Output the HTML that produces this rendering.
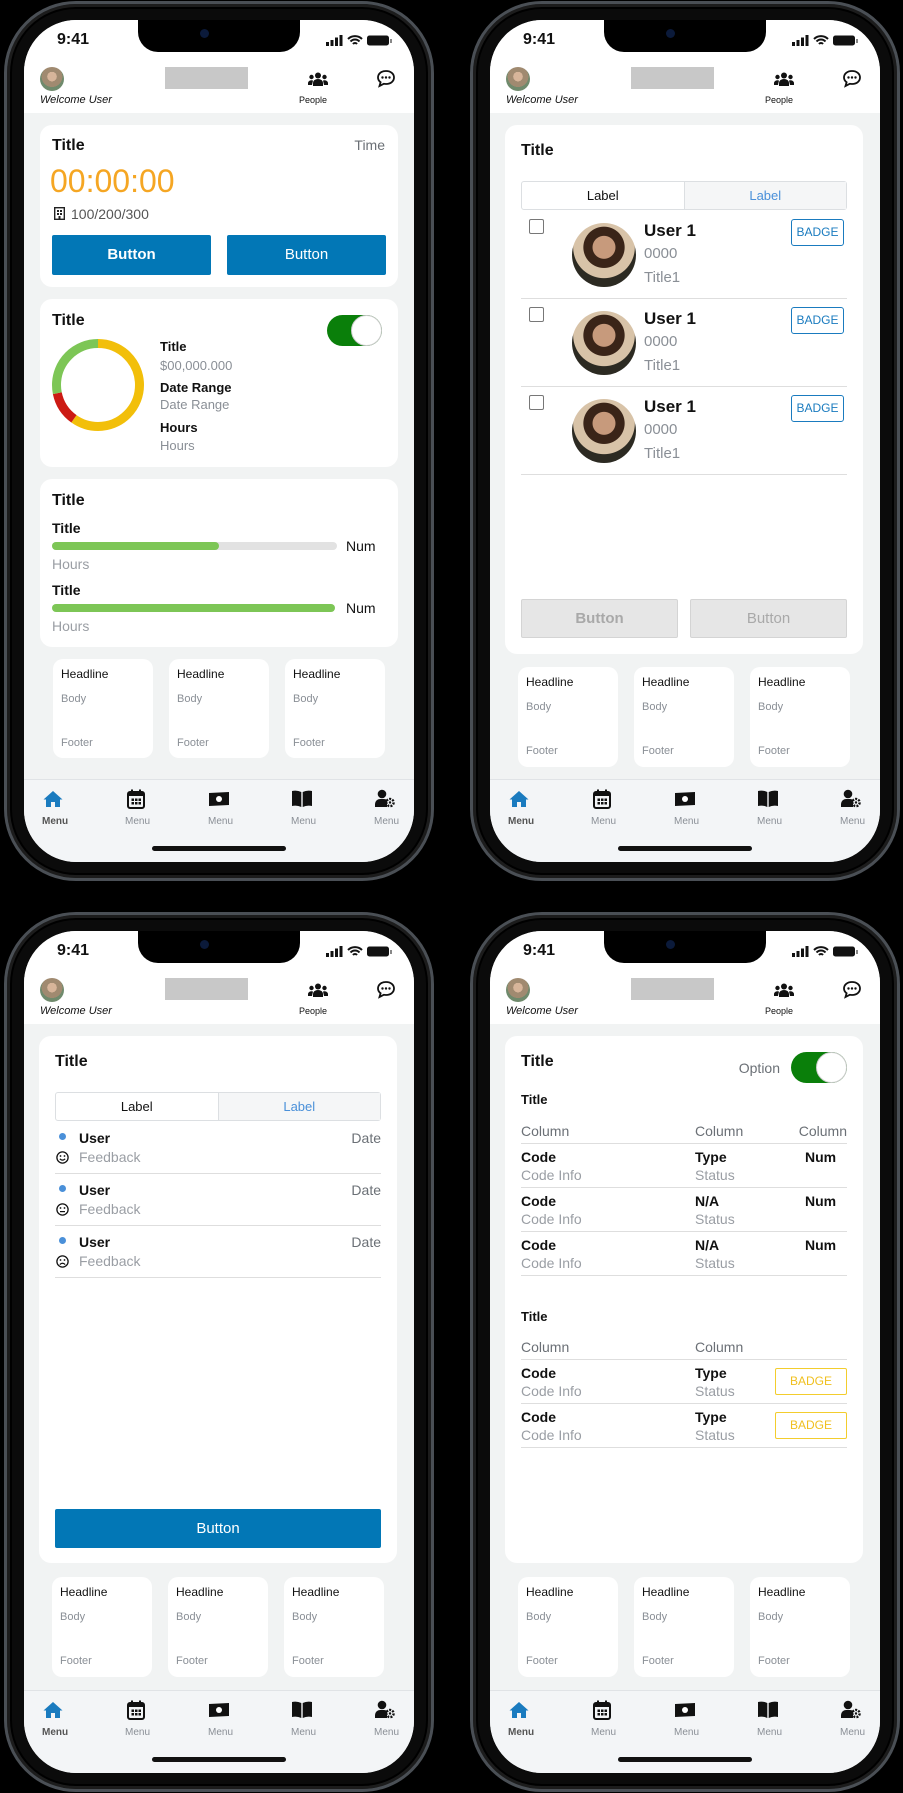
<!DOCTYPE html>
<html><head><meta charset="utf-8">
<style>
*{box-sizing:border-box;margin:0;padding:0}
body{width:903px;height:1793px;background:#000;position:relative;overflow:hidden;font-family:"Liberation Sans",sans-serif;color:#111}
.frame{position:absolute;width:430px;height:880px;border-radius:72px;background:#0b0b0b;border:3px solid #4a4f55;box-shadow:inset 0 0 0 3px #1c1c1c,inset 0 0 0 5px #000}
.screen{position:absolute;width:390px;height:842px;border-radius:52px;overflow:hidden;background:#f1f3f3}
.a{position:absolute;white-space:nowrap;line-height:1}
.hdr{position:absolute;left:0;top:0;width:390px;height:93px;background:#fff}
.notch{position:absolute;left:114px;top:0;width:162px;height:32px;background:#000;border-radius:0 0 20px 20px}
.cam{position:absolute;left:62px;top:9px;width:9px;height:9px;border-radius:50%;background:#0b1a3a}
.card{position:absolute;background:#fff;border-radius:12px}
.sc{position:absolute;width:100px;height:99px;background:#fff;border-radius:10px}
.nav{position:absolute;left:0;top:759px;width:390px;height:83px;background:#f3f5f7;border-top:1px solid #e0e3e6}
.home{position:absolute;left:128px;top:826px;width:134px;height:5px;border-radius:3px;background:#111}
.btn{position:absolute;height:40px;background:#0277b6;border-radius:2px;color:#fff;font-size:15px;text-align:center;line-height:40px}
.gbtn{position:absolute;height:39px;background:#e6e6e6;border:1px solid #d4d4d4;border-radius:2px;color:#a9a9a9;font-size:15px;text-align:center;line-height:37px}
.seg{position:absolute;height:29px;border:1px solid #dcdfe2;border-radius:3px;display:flex;font-size:13px}
.seg div{flex:1;text-align:center;line-height:27px}
.seg div+div{background:#f5f6f7;color:#4a90d9;border-left:1px solid #dcdfe2}
.sep{position:absolute;height:1px;background:#dedede}
.gray{color:#8a8f96}
.b{font-weight:bold}
.ava{position:absolute;width:64px;height:64px;border-radius:50%;background:radial-gradient(circle at 50% 38%,#c79a7c 0 22%,#3a2418 23% 40%,#d8c3a8 41% 60%,#2c2a22 61%)}
.badge{position:absolute;width:53px;height:27px;border:1.5px solid #1a7bbf;border-radius:3px;color:#1a7bbf;font-size:12px;text-align:center;line-height:24px}
.ybadge{position:absolute;width:72px;height:27px;border:1.5px solid #f3cd2d;border-radius:2px;color:#f0c020;font-size:12px;text-align:center;line-height:24px}
.tog{position:absolute;width:55px;height:31px;border-radius:16px;background:#0a7f0a}
.tog::after{content:"";position:absolute;right:0;top:0;width:31px;height:31px;border-radius:50%;background:#fff;border:1px solid #ccc;box-sizing:border-box}
</style></head><body>

<div class="frame" style="left:4px;top:1px"></div>
<div class="frame" style="left:470px;top:1px"></div>
<div class="frame" style="left:4px;top:912px"></div>
<div class="frame" style="left:470px;top:912px"></div>

<!-- ================= PHONE 1 ================= -->
<div class="screen" style="left:24px;top:20px">
 <div class="hdr"></div>
 <div class="notch"><div class="cam"></div></div>
 <div class="a b" style="left:33px;top:12px;font-size:16px;font-weight:600">9:41</div>
 <svg class="a" style="left:302px;top:14px" width="68" height="14" viewBox="0 0 68 14"><rect x="0" y="8" width="3" height="4" fill="#111"/><rect x="4.5" y="6" width="3" height="6" fill="#111"/><rect x="9" y="3.5" width="3" height="8.5" fill="#111"/><rect x="13.5" y="1" width="3" height="11" fill="#111"/><path d="M22 5a10 10 0 0 1 14 0M24.5 7.5a6 6 0 0 1 9 0M27 10a2.5 2.5 0 0 1 4 0" stroke="#111" stroke-width="2" fill="none"/><rect x="41" y="1.5" width="22" height="10" rx="2.5" fill="#111"/><rect x="64" y="5" width="2" height="4" fill="#888"/></svg>
 <div class="a" style="left:16px;top:47px;width:24px;height:24px;border-radius:50%;background:radial-gradient(circle at 50% 40%,#d7b59a 0 25%,#a08a70 26% 55%,#6f8a6c 56%)"></div>
 <div class="a" style="left:16px;top:75px;font-size:11px;font-style:italic">Welcome User</div>
 <div class="a" style="left:141px;top:47px;width:83px;height:22px;background:#c8c8c8"></div>
 <svg class="a" style="left:284px;top:52px" width="20" height="14" viewBox="0 0 20 14"><circle cx="10" cy="3.5" r="3" fill="#111"/><circle cx="3.5" cy="5" r="2.2" fill="#111"/><circle cx="16.5" cy="5" r="2.2" fill="#111"/><path d="M5 14v-3a5 4 0 0 1 10 0v3z" fill="#111"/><path d="M0 13v-2a3.5 3 0 0 1 5-2.5L4 13zM20 13v-2a3.5 3 0 0 0-5-2.5L16 13z" fill="#111"/></svg>
 <div class="a" style="left:275px;top:76px;font-size:9px">People</div>
 <svg class="a" style="left:352px;top:49px" width="20" height="19" viewBox="0 0 20 19"><path d="M10 2C5 2 2 5 2 8.5c0 2 1 3.6 2.6 4.7L3.5 17l4.2-2.2c.7.2 1.5.2 2.3.2 5 0 8-3 8-6.5S15 2 10 2z" fill="none" stroke="#111" stroke-width="1.8"/><circle cx="6.5" cy="8.5" r="1.2" fill="#111"/><circle cx="10" cy="8.5" r="1.2" fill="#111"/><circle cx="13.5" cy="8.5" r="1.2" fill="#111"/></svg>

 <div class="card" style="left:16px;top:105px;width:358px;height:162px">
  <div class="a b" style="left:12px;top:13px;font-size:16px">Title</div>
  <div class="a gray" style="right:13px;top:13px;font-size:14px;color:#6b7076">Time</div>
  <div class="a" style="left:10px;top:40px;font-size:32px;color:#f5a623">00:00:00</div>
  <svg class="a" style="left:14px;top:82px" width="11" height="13" viewBox="0 0 11 13"><rect x="0.7" y="0.7" width="9.6" height="11.6" fill="none" stroke="#222" stroke-width="1.4"/><rect x="3" y="3" width="2" height="2" fill="#222"/><rect x="6" y="3" width="2" height="2" fill="#222"/><rect x="3" y="6" width="2" height="2" fill="#222"/><rect x="6" y="6" width="2" height="2" fill="#222"/><rect x="4.5" y="9" width="2" height="3.5" fill="#222"/></svg>
  <div class="a" style="left:31px;top:82px;font-size:14px;color:#555">100/200/300</div>
  <div class="btn b" style="left:12px;top:110px;width:159px">Button</div>
  <div class="btn" style="left:187px;top:110px;width:159px">Button</div>
 </div>

 <div class="card" style="left:16px;top:279px;width:358px;height:168px">
  <div class="a b" style="left:12px;top:14px;font-size:16px">Title</div>
  <div class="tog" style="left:287px;top:16px"></div>
  <svg class="a" style="left:12px;top:40px" width="92" height="92" viewBox="0 0 92 92"><g transform="rotate(-90 46 46)" fill="none" stroke-width="9"><circle cx="46" cy="46" r="41.5" stroke="#f2bf0a" stroke-dasharray="155.8 300"/><circle cx="46" cy="46" r="41.5" stroke="#cc1a14" stroke-dasharray="0 155.8 31.2 300"/><circle cx="46" cy="46" r="41.5" stroke="#7dc656" stroke-dasharray="0 187 74 300"/></g></svg>
  <div class="a b" style="left:120px;top:41px;font-size:13px">Title</div>
  <div class="a gray" style="left:120px;top:60px;font-size:13px">$00,000.000</div>
  <div class="a b" style="left:120px;top:82px;font-size:13px">Date Range</div>
  <div class="a gray" style="left:120px;top:99px;font-size:13px">Date Range</div>
  <div class="a b" style="left:120px;top:122px;font-size:13px">Hours</div>
  <div class="a gray" style="left:120px;top:140px;font-size:13px">Hours</div>
 </div>

 <div class="card" style="left:16px;top:459px;width:358px;height:168px">
  <div class="a b" style="left:12px;top:14px;font-size:16px">Title</div>
  <div class="a b" style="left:12px;top:42px;font-size:14px">Title</div>
  <div class="a" style="left:12px;top:63px;width:285px;height:8px;border-radius:4px;background:#e2e2e2"><div style="width:167px;height:8px;border-radius:4px;background:#7dc656"></div></div>
  <div class="a" style="left:306px;top:60px;font-size:14px">Num</div>
  <div class="a gray" style="left:12px;top:78px;font-size:14px;color:#9a9ea4">Hours</div>
  <div class="a b" style="left:12px;top:104px;font-size:14px">Title</div>
  <div class="a" style="left:12px;top:125px;width:283px;height:8px;border-radius:4px;background:#7dc656"></div>
  <div class="a" style="left:306px;top:122px;font-size:14px">Num</div>
  <div class="a gray" style="left:12px;top:140px;font-size:14px;color:#9a9ea4">Hours</div>
 </div>

 <div class="sc" style="left:29px;top:639px"><div class="a" style="left:8px;top:9px;font-size:12px">Headline</div><div class="a gray" style="left:8px;top:35px;font-size:11px">Body</div><div class="a gray" style="left:8px;top:79px;font-size:11px">Footer</div></div>
 <div class="sc" style="left:145px;top:639px"><div class="a" style="left:8px;top:9px;font-size:12px">Headline</div><div class="a gray" style="left:8px;top:35px;font-size:11px">Body</div><div class="a gray" style="left:8px;top:79px;font-size:11px">Footer</div></div>
 <div class="sc" style="left:261px;top:639px"><div class="a" style="left:8px;top:9px;font-size:12px">Headline</div><div class="a gray" style="left:8px;top:35px;font-size:11px">Body</div><div class="a gray" style="left:8px;top:79px;font-size:11px">Footer</div></div>

 <div class="nav">
  <svg class="a" style="left:19px;top:10px" width="20" height="18" viewBox="0 0 20 18"><path d="M10 1L0.5 9.5h2.5V17h5v-5h4v5h5V9.5h2.5z" fill="#1a7bbf"/></svg>
  <svg class="a" style="left:103px;top:9px" width="18" height="20" viewBox="0 0 18 20"><rect x="1" y="3" width="16" height="16" rx="2" fill="none" stroke="#111" stroke-width="2"/><rect x="1" y="3" width="16" height="4" fill="#111"/><rect x="4" y="0.5" width="2" height="4" fill="#111"/><rect x="12" y="0.5" width="2" height="4" fill="#111"/><g fill="#111"><rect x="4.5" y="9.5" width="2.5" height="2.5"/><rect x="8" y="9.5" width="2.5" height="2.5"/><rect x="11.5" y="9.5" width="2.5" height="2.5"/><rect x="4.5" y="13" width="2.5" height="2.5"/><rect x="8" y="13" width="2.5" height="2.5"/><rect x="11.5" y="13" width="2.5" height="2.5"/></g></svg>
  <svg class="a" style="left:185px;top:12px" width="20" height="14" viewBox="0 0 20 14"><path d="M0 1l20 -1v13l-20 1z" fill="#111"/><circle cx="10" cy="7" r="3" fill="#fff"/></svg>
  <svg class="a" style="left:268px;top:10px" width="20" height="17" viewBox="0 0 20 17"><path d="M0 1q5-1 9.3 1v15q-4.3-2-9.3-1zM20 1q-5-1-9.3 1v15q4.3-2 9.3-1z" fill="#111"/></svg>
  <svg class="a" style="left:351px;top:9px" width="20" height="19" viewBox="0 0 20 19"><circle cx="7" cy="5" r="4.3" fill="#111"/><path d="M0 18v-3a5 5 0 0 1 5-5h4a5 5 0 0 1 3 1v7z" fill="#111"/><circle cx="15" cy="13.5" r="3.6" fill="none" stroke="#111" stroke-width="2.4" stroke-dasharray="2 1.2"/><circle cx="15" cy="13.5" r="1.2" fill="#111"/></svg>
  <div class="a b" style="left:18px;top:37px;font-size:10px;color:#555">Menu</div>
  <div class="a gray" style="left:101px;top:37px;font-size:10px">Menu</div>
  <div class="a gray" style="left:184px;top:37px;font-size:10px">Menu</div>
  <div class="a gray" style="left:267px;top:37px;font-size:10px">Menu</div>
  <div class="a gray" style="left:350px;top:37px;font-size:10px">Menu</div>
 </div>
 <div class="home"></div>
</div>

<!-- ================= PHONE 2 ================= -->
<div class="screen" style="left:490px;top:20px">
 <div class="hdr"></div>
 <div class="notch"><div class="cam"></div></div>
 <div class="a b" style="left:33px;top:12px;font-size:16px;font-weight:600">9:41</div>
 <svg class="a" style="left:302px;top:14px" width="68" height="14" viewBox="0 0 68 14"><rect x="0" y="8" width="3" height="4" fill="#111"/><rect x="4.5" y="6" width="3" height="6" fill="#111"/><rect x="9" y="3.5" width="3" height="8.5" fill="#111"/><rect x="13.5" y="1" width="3" height="11" fill="#111"/><path d="M22 5a10 10 0 0 1 14 0M24.5 7.5a6 6 0 0 1 9 0M27 10a2.5 2.5 0 0 1 4 0" stroke="#111" stroke-width="2" fill="none"/><rect x="41" y="1.5" width="22" height="10" rx="2.5" fill="#111"/><rect x="64" y="5" width="2" height="4" fill="#888"/></svg>
 <div class="a" style="left:16px;top:47px;width:24px;height:24px;border-radius:50%;background:radial-gradient(circle at 50% 40%,#d7b59a 0 25%,#a08a70 26% 55%,#6f8a6c 56%)"></div>
 <div class="a" style="left:16px;top:75px;font-size:11px;font-style:italic">Welcome User</div>
 <div class="a" style="left:141px;top:47px;width:83px;height:22px;background:#c8c8c8"></div>
 <svg class="a" style="left:284px;top:52px" width="20" height="14" viewBox="0 0 20 14"><circle cx="10" cy="3.5" r="3" fill="#111"/><circle cx="3.5" cy="5" r="2.2" fill="#111"/><circle cx="16.5" cy="5" r="2.2" fill="#111"/><path d="M5 14v-3a5 4 0 0 1 10 0v3z" fill="#111"/><path d="M0 13v-2a3.5 3 0 0 1 5-2.5L4 13zM20 13v-2a3.5 3 0 0 0-5-2.5L16 13z" fill="#111"/></svg>
 <div class="a" style="left:275px;top:76px;font-size:9px">People</div>
 <svg class="a" style="left:352px;top:49px" width="20" height="19" viewBox="0 0 20 19"><path d="M10 2C5 2 2 5 2 8.5c0 2 1 3.6 2.6 4.7L3.5 17l4.2-2.2c.7.2 1.5.2 2.3.2 5 0 8-3 8-6.5S15 2 10 2z" fill="none" stroke="#111" stroke-width="1.8"/><circle cx="6.5" cy="8.5" r="1.2" fill="#111"/><circle cx="10" cy="8.5" r="1.2" fill="#111"/><circle cx="13.5" cy="8.5" r="1.2" fill="#111"/></svg>

 <div class="card" style="left:15px;top:105px;width:358px;height:529px">
  <div class="a b" style="left:16px;top:18px;font-size:16px">Title</div>
  <div class="seg" style="left:16px;top:56px;width:326px"><div>Label</div><div>Label</div></div>
  <div class="a" style="left:24px;top:94px;width:15px;height:15px;border:1px solid #777;border-radius:2px"></div>
  <div class="ava" style="left:67px;top:98px"></div>
  <div class="a b" style="left:139px;top:97px;font-size:17px">User 1</div>
  <div class="a gray" style="left:139px;top:121px;font-size:15px">0000</div>
  <div class="a gray" style="left:139px;top:145px;font-size:15px">Title1</div>
  <div class="badge" style="left:286px;top:94px">BADGE</div>
  <div class="sep" style="left:16px;top:173px;width:326px"></div>
  <div class="a" style="left:24px;top:182px;width:15px;height:15px;border:1px solid #777;border-radius:2px"></div>
  <div class="ava" style="left:67px;top:186px"></div>
  <div class="a b" style="left:139px;top:185px;font-size:17px">User 1</div>
  <div class="a gray" style="left:139px;top:209px;font-size:15px">0000</div>
  <div class="a gray" style="left:139px;top:233px;font-size:15px">Title1</div>
  <div class="badge" style="left:286px;top:182px">BADGE</div>
  <div class="sep" style="left:16px;top:261px;width:326px"></div>
  <div class="a" style="left:24px;top:270px;width:15px;height:15px;border:1px solid #777;border-radius:2px"></div>
  <div class="ava" style="left:67px;top:274px"></div>
  <div class="a b" style="left:139px;top:273px;font-size:17px">User 1</div>
  <div class="a gray" style="left:139px;top:297px;font-size:15px">0000</div>
  <div class="a gray" style="left:139px;top:321px;font-size:15px">Title1</div>
  <div class="badge" style="left:286px;top:270px">BADGE</div>
  <div class="sep" style="left:16px;top:349px;width:326px"></div>
  <div class="gbtn b" style="left:16px;top:474px;width:157px">Button</div>
  <div class="gbtn" style="left:185px;top:474px;width:157px">Button</div>
 </div>

 <div class="sc" style="left:28px;top:647px;height:100px"><div class="a" style="left:8px;top:9px;font-size:12px">Headline</div><div class="a gray" style="left:8px;top:35px;font-size:11px">Body</div><div class="a gray" style="left:8px;top:79px;font-size:11px">Footer</div></div>
 <div class="sc" style="left:144px;top:647px;height:100px"><div class="a" style="left:8px;top:9px;font-size:12px">Headline</div><div class="a gray" style="left:8px;top:35px;font-size:11px">Body</div><div class="a gray" style="left:8px;top:79px;font-size:11px">Footer</div></div>
 <div class="sc" style="left:260px;top:647px;height:100px"><div class="a" style="left:8px;top:9px;font-size:12px">Headline</div><div class="a gray" style="left:8px;top:35px;font-size:11px">Body</div><div class="a gray" style="left:8px;top:79px;font-size:11px">Footer</div></div>

 <div class="nav">
  <svg class="a" style="left:19px;top:10px" width="20" height="18" viewBox="0 0 20 18"><path d="M10 1L0.5 9.5h2.5V17h5v-5h4v5h5V9.5h2.5z" fill="#1a7bbf"/></svg>
  <svg class="a" style="left:103px;top:9px" width="18" height="20" viewBox="0 0 18 20"><rect x="1" y="3" width="16" height="16" rx="2" fill="none" stroke="#111" stroke-width="2"/><rect x="1" y="3" width="16" height="4" fill="#111"/><rect x="4" y="0.5" width="2" height="4" fill="#111"/><rect x="12" y="0.5" width="2" height="4" fill="#111"/><g fill="#111"><rect x="4.5" y="9.5" width="2.5" height="2.5"/><rect x="8" y="9.5" width="2.5" height="2.5"/><rect x="11.5" y="9.5" width="2.5" height="2.5"/><rect x="4.5" y="13" width="2.5" height="2.5"/><rect x="8" y="13" width="2.5" height="2.5"/><rect x="11.5" y="13" width="2.5" height="2.5"/></g></svg>
  <svg class="a" style="left:185px;top:12px" width="20" height="14" viewBox="0 0 20 14"><path d="M0 1l20 -1v13l-20 1z" fill="#111"/><circle cx="10" cy="7" r="3" fill="#fff"/></svg>
  <svg class="a" style="left:268px;top:10px" width="20" height="17" viewBox="0 0 20 17"><path d="M0 1q5-1 9.3 1v15q-4.3-2-9.3-1zM20 1q-5-1-9.3 1v15q4.3-2 9.3-1z" fill="#111"/></svg>
  <svg class="a" style="left:351px;top:9px" width="20" height="19" viewBox="0 0 20 19"><circle cx="7" cy="5" r="4.3" fill="#111"/><path d="M0 18v-3a5 5 0 0 1 5-5h4a5 5 0 0 1 3 1v7z" fill="#111"/><circle cx="15" cy="13.5" r="3.6" fill="none" stroke="#111" stroke-width="2.4" stroke-dasharray="2 1.2"/><circle cx="15" cy="13.5" r="1.2" fill="#111"/></svg>
  <div class="a b" style="left:18px;top:37px;font-size:10px;color:#555">Menu</div>
  <div class="a gray" style="left:101px;top:37px;font-size:10px">Menu</div>
  <div class="a gray" style="left:184px;top:37px;font-size:10px">Menu</div>
  <div class="a gray" style="left:267px;top:37px;font-size:10px">Menu</div>
  <div class="a gray" style="left:350px;top:37px;font-size:10px">Menu</div>
 </div>
 <div class="home"></div>
</div>

<!-- ================= PHONE 3 ================= -->
<div class="screen" style="left:24px;top:931px">
 <div class="hdr"></div>
 <div class="notch"><div class="cam"></div></div>
 <div class="a b" style="left:33px;top:12px;font-size:16px;font-weight:600">9:41</div>
 <svg class="a" style="left:302px;top:14px" width="68" height="14" viewBox="0 0 68 14"><rect x="0" y="8" width="3" height="4" fill="#111"/><rect x="4.5" y="6" width="3" height="6" fill="#111"/><rect x="9" y="3.5" width="3" height="8.5" fill="#111"/><rect x="13.5" y="1" width="3" height="11" fill="#111"/><path d="M22 5a10 10 0 0 1 14 0M24.5 7.5a6 6 0 0 1 9 0M27 10a2.5 2.5 0 0 1 4 0" stroke="#111" stroke-width="2" fill="none"/><rect x="41" y="1.5" width="22" height="10" rx="2.5" fill="#111"/><rect x="64" y="5" width="2" height="4" fill="#888"/></svg>
 <div class="a" style="left:16px;top:47px;width:24px;height:24px;border-radius:50%;background:radial-gradient(circle at 50% 40%,#d7b59a 0 25%,#a08a70 26% 55%,#6f8a6c 56%)"></div>
 <div class="a" style="left:16px;top:75px;font-size:11px;font-style:italic">Welcome User</div>
 <div class="a" style="left:141px;top:47px;width:83px;height:22px;background:#c8c8c8"></div>
 <svg class="a" style="left:284px;top:52px" width="20" height="14" viewBox="0 0 20 14"><circle cx="10" cy="3.5" r="3" fill="#111"/><circle cx="3.5" cy="5" r="2.2" fill="#111"/><circle cx="16.5" cy="5" r="2.2" fill="#111"/><path d="M5 14v-3a5 4 0 0 1 10 0v3z" fill="#111"/><path d="M0 13v-2a3.5 3 0 0 1 5-2.5L4 13zM20 13v-2a3.5 3 0 0 0-5-2.5L16 13z" fill="#111"/></svg>
 <div class="a" style="left:275px;top:76px;font-size:9px">People</div>
 <svg class="a" style="left:352px;top:49px" width="20" height="19" viewBox="0 0 20 19"><path d="M10 2C5 2 2 5 2 8.5c0 2 1 3.6 2.6 4.7L3.5 17l4.2-2.2c.7.2 1.5.2 2.3.2 5 0 8-3 8-6.5S15 2 10 2z" fill="none" stroke="#111" stroke-width="1.8"/><circle cx="6.5" cy="8.5" r="1.2" fill="#111"/><circle cx="10" cy="8.5" r="1.2" fill="#111"/><circle cx="13.5" cy="8.5" r="1.2" fill="#111"/></svg>

 <div class="card" style="left:15px;top:105px;width:358px;height:527px">
  <div class="a b" style="left:16px;top:18px;font-size:16px">Title</div>
  <div class="seg" style="left:16px;top:56px;width:326px"><div>Label</div><div>Label</div></div>
  <div class="a" style="left:20px;top:97px;width:7px;height:7px;border-radius:50%;background:#4a90d9"></div>
  <div class="a b" style="left:40px;top:95px;font-size:14px">User</div>
  <div class="a" style="right:16px;top:95px;font-size:14px;color:#6b7076">Date</div>
  <svg class="a" style="left:17px;top:115px" width="13" height="13" viewBox="0 0 13 13"><circle cx="6.5" cy="6.5" r="5.6" fill="none" stroke="#111" stroke-width="1.3"/><circle cx="4.5" cy="5" r="0.9" fill="#111"/><circle cx="8.5" cy="5" r="0.9" fill="#111"/><path d="M3.8 7.8q2.7 2.6 5.4 0" fill="none" stroke="#111" stroke-width="1.2"/></svg>
  <div class="a gray" style="left:40px;top:114px;font-size:14px;color:#9a9ea4">Feedback</div>
  <div class="sep" style="left:16px;top:137px;width:326px"></div>
  <div class="a" style="left:20px;top:149px;width:7px;height:7px;border-radius:50%;background:#4a90d9"></div>
  <div class="a b" style="left:40px;top:147px;font-size:14px">User</div>
  <div class="a" style="right:16px;top:147px;font-size:14px;color:#6b7076">Date</div>
  <svg class="a" style="left:17px;top:167px" width="13" height="13" viewBox="0 0 13 13"><circle cx="6.5" cy="6.5" r="5.6" fill="none" stroke="#111" stroke-width="1.3"/><circle cx="4.5" cy="5" r="0.9" fill="#111"/><circle cx="8.5" cy="5" r="0.9" fill="#111"/><path d="M4 8.6h5" stroke="#111" stroke-width="1.2"/></svg>
  <div class="a gray" style="left:40px;top:166px;font-size:14px;color:#9a9ea4">Feedback</div>
  <div class="sep" style="left:16px;top:189px;width:326px"></div>
  <div class="a" style="left:20px;top:201px;width:7px;height:7px;border-radius:50%;background:#4a90d9"></div>
  <div class="a b" style="left:40px;top:199px;font-size:14px">User</div>
  <div class="a" style="right:16px;top:199px;font-size:14px;color:#6b7076">Date</div>
  <svg class="a" style="left:17px;top:219px" width="13" height="13" viewBox="0 0 13 13"><circle cx="6.5" cy="6.5" r="5.6" fill="none" stroke="#111" stroke-width="1.3"/><circle cx="4.5" cy="5" r="0.9" fill="#111"/><circle cx="8.5" cy="5" r="0.9" fill="#111"/><path d="M3.8 9.6q2.7-2.6 5.4 0" fill="none" stroke="#111" stroke-width="1.2"/></svg>
  <div class="a gray" style="left:40px;top:218px;font-size:14px;color:#9a9ea4">Feedback</div>
  <div class="sep" style="left:16px;top:241px;width:326px"></div>
  <div class="btn" style="left:16px;top:473px;width:326px;height:39px;line-height:39px">Button</div>
 </div>

 <div class="sc" style="left:28px;top:646px;height:100px"><div class="a" style="left:8px;top:9px;font-size:12px">Headline</div><div class="a gray" style="left:8px;top:35px;font-size:11px">Body</div><div class="a gray" style="left:8px;top:79px;font-size:11px">Footer</div></div>
 <div class="sc" style="left:144px;top:646px;height:100px"><div class="a" style="left:8px;top:9px;font-size:12px">Headline</div><div class="a gray" style="left:8px;top:35px;font-size:11px">Body</div><div class="a gray" style="left:8px;top:79px;font-size:11px">Footer</div></div>
 <div class="sc" style="left:260px;top:646px;height:100px"><div class="a" style="left:8px;top:9px;font-size:12px">Headline</div><div class="a gray" style="left:8px;top:35px;font-size:11px">Body</div><div class="a gray" style="left:8px;top:79px;font-size:11px">Footer</div></div>

 <div class="nav">
  <svg class="a" style="left:19px;top:10px" width="20" height="18" viewBox="0 0 20 18"><path d="M10 1L0.5 9.5h2.5V17h5v-5h4v5h5V9.5h2.5z" fill="#1a7bbf"/></svg>
  <svg class="a" style="left:103px;top:9px" width="18" height="20" viewBox="0 0 18 20"><rect x="1" y="3" width="16" height="16" rx="2" fill="none" stroke="#111" stroke-width="2"/><rect x="1" y="3" width="16" height="4" fill="#111"/><rect x="4" y="0.5" width="2" height="4" fill="#111"/><rect x="12" y="0.5" width="2" height="4" fill="#111"/><g fill="#111"><rect x="4.5" y="9.5" width="2.5" height="2.5"/><rect x="8" y="9.5" width="2.5" height="2.5"/><rect x="11.5" y="9.5" width="2.5" height="2.5"/><rect x="4.5" y="13" width="2.5" height="2.5"/><rect x="8" y="13" width="2.5" height="2.5"/><rect x="11.5" y="13" width="2.5" height="2.5"/></g></svg>
  <svg class="a" style="left:185px;top:12px" width="20" height="14" viewBox="0 0 20 14"><path d="M0 1l20 -1v13l-20 1z" fill="#111"/><circle cx="10" cy="7" r="3" fill="#fff"/></svg>
  <svg class="a" style="left:268px;top:10px" width="20" height="17" viewBox="0 0 20 17"><path d="M0 1q5-1 9.3 1v15q-4.3-2-9.3-1zM20 1q-5-1-9.3 1v15q4.3-2 9.3-1z" fill="#111"/></svg>
  <svg class="a" style="left:351px;top:9px" width="20" height="19" viewBox="0 0 20 19"><circle cx="7" cy="5" r="4.3" fill="#111"/><path d="M0 18v-3a5 5 0 0 1 5-5h4a5 5 0 0 1 3 1v7z" fill="#111"/><circle cx="15" cy="13.5" r="3.6" fill="none" stroke="#111" stroke-width="2.4" stroke-dasharray="2 1.2"/><circle cx="15" cy="13.5" r="1.2" fill="#111"/></svg>
  <div class="a b" style="left:18px;top:37px;font-size:10px;color:#555">Menu</div>
  <div class="a gray" style="left:101px;top:37px;font-size:10px">Menu</div>
  <div class="a gray" style="left:184px;top:37px;font-size:10px">Menu</div>
  <div class="a gray" style="left:267px;top:37px;font-size:10px">Menu</div>
  <div class="a gray" style="left:350px;top:37px;font-size:10px">Menu</div>
 </div>
 <div class="home"></div>
</div>

<!-- ================= PHONE 4 ================= -->
<div class="screen" style="left:490px;top:931px">
 <div class="hdr"></div>
 <div class="notch"><div class="cam"></div></div>
 <div class="a b" style="left:33px;top:12px;font-size:16px;font-weight:600">9:41</div>
 <svg class="a" style="left:302px;top:14px" width="68" height="14" viewBox="0 0 68 14"><rect x="0" y="8" width="3" height="4" fill="#111"/><rect x="4.5" y="6" width="3" height="6" fill="#111"/><rect x="9" y="3.5" width="3" height="8.5" fill="#111"/><rect x="13.5" y="1" width="3" height="11" fill="#111"/><path d="M22 5a10 10 0 0 1 14 0M24.5 7.5a6 6 0 0 1 9 0M27 10a2.5 2.5 0 0 1 4 0" stroke="#111" stroke-width="2" fill="none"/><rect x="41" y="1.5" width="22" height="10" rx="2.5" fill="#111"/><rect x="64" y="5" width="2" height="4" fill="#888"/></svg>
 <div class="a" style="left:16px;top:47px;width:24px;height:24px;border-radius:50%;background:radial-gradient(circle at 50% 40%,#d7b59a 0 25%,#a08a70 26% 55%,#6f8a6c 56%)"></div>
 <div class="a" style="left:16px;top:75px;font-size:11px;font-style:italic">Welcome User</div>
 <div class="a" style="left:141px;top:47px;width:83px;height:22px;background:#c8c8c8"></div>
 <svg class="a" style="left:284px;top:52px" width="20" height="14" viewBox="0 0 20 14"><circle cx="10" cy="3.5" r="3" fill="#111"/><circle cx="3.5" cy="5" r="2.2" fill="#111"/><circle cx="16.5" cy="5" r="2.2" fill="#111"/><path d="M5 14v-3a5 4 0 0 1 10 0v3z" fill="#111"/><path d="M0 13v-2a3.5 3 0 0 1 5-2.5L4 13zM20 13v-2a3.5 3 0 0 0-5-2.5L16 13z" fill="#111"/></svg>
 <div class="a" style="left:275px;top:76px;font-size:9px">People</div>
 <svg class="a" style="left:352px;top:49px" width="20" height="19" viewBox="0 0 20 19"><path d="M10 2C5 2 2 5 2 8.5c0 2 1 3.6 2.6 4.7L3.5 17l4.2-2.2c.7.2 1.5.2 2.3.2 5 0 8-3 8-6.5S15 2 10 2z" fill="none" stroke="#111" stroke-width="1.8"/><circle cx="6.5" cy="8.5" r="1.2" fill="#111"/><circle cx="10" cy="8.5" r="1.2" fill="#111"/><circle cx="13.5" cy="8.5" r="1.2" fill="#111"/></svg>

 <div class="card" style="left:15px;top:105px;width:358px;height:527px">
  <div class="a b" style="left:16px;top:18px;font-size:16px">Title</div>
  <div class="a" style="right:83px;top:25px;font-size:14px;color:#6b7076">Option</div>
  <div class="tog" style="left:286px;top:16px;width:56px"></div>
  <div class="a b" style="left:16px;top:57px;font-size:13px">Title</div>
  <div class="a" style="left:16px;top:88px;font-size:14px;color:#6b7076">Column</div>
  <div class="a" style="left:190px;top:88px;font-size:14px;color:#6b7076">Column</div>
  <div class="a" style="right:16px;top:88px;font-size:14px;color:#6b7076">Column</div>
  <div class="sep" style="left:16px;top:107px;width:326px"></div>
  <div class="a b" style="left:16px;top:114px;font-size:14px">Code</div><div class="a" style="left:16px;top:132px;font-size:14px;color:#9a9ea4">Code Info</div>
  <div class="a b" style="left:190px;top:114px;font-size:14px">Type</div><div class="a" style="left:190px;top:132px;font-size:14px;color:#9a9ea4">Status</div>
  <div class="a b" style="left:300px;top:114px;font-size:14px">Num</div>
  <div class="sep" style="left:16px;top:151px;width:326px"></div>
  <div class="a b" style="left:16px;top:158px;font-size:14px">Code</div><div class="a" style="left:16px;top:176px;font-size:14px;color:#9a9ea4">Code Info</div>
  <div class="a b" style="left:190px;top:158px;font-size:14px">N/A</div><div class="a" style="left:190px;top:176px;font-size:14px;color:#9a9ea4">Status</div>
  <div class="a b" style="left:300px;top:158px;font-size:14px">Num</div>
  <div class="sep" style="left:16px;top:195px;width:326px"></div>
  <div class="a b" style="left:16px;top:202px;font-size:14px">Code</div><div class="a" style="left:16px;top:220px;font-size:14px;color:#9a9ea4">Code Info</div>
  <div class="a b" style="left:190px;top:202px;font-size:14px">N/A</div><div class="a" style="left:190px;top:220px;font-size:14px;color:#9a9ea4">Status</div>
  <div class="a b" style="left:300px;top:202px;font-size:14px">Num</div>
  <div class="sep" style="left:16px;top:239px;width:326px"></div>

  <div class="a b" style="left:16px;top:274px;font-size:13px">Title</div>
  <div class="a" style="left:16px;top:304px;font-size:14px;color:#6b7076">Column</div>
  <div class="a" style="left:190px;top:304px;font-size:14px;color:#6b7076">Column</div>
  <div class="sep" style="left:16px;top:323px;width:326px"></div>
  <div class="a b" style="left:16px;top:330px;font-size:14px">Code</div><div class="a" style="left:16px;top:348px;font-size:14px;color:#9a9ea4">Code Info</div>
  <div class="a b" style="left:190px;top:330px;font-size:14px">Type</div><div class="a" style="left:190px;top:348px;font-size:14px;color:#9a9ea4">Status</div>
  <div class="ybadge" style="left:270px;top:332px">BADGE</div>
  <div class="sep" style="left:16px;top:367px;width:326px"></div>
  <div class="a b" style="left:16px;top:374px;font-size:14px">Code</div><div class="a" style="left:16px;top:392px;font-size:14px;color:#9a9ea4">Code Info</div>
  <div class="a b" style="left:190px;top:374px;font-size:14px">Type</div><div class="a" style="left:190px;top:392px;font-size:14px;color:#9a9ea4">Status</div>
  <div class="ybadge" style="left:270px;top:376px">BADGE</div>
  <div class="sep" style="left:16px;top:411px;width:326px"></div>
 </div>

 <div class="sc" style="left:28px;top:646px;height:100px"><div class="a" style="left:8px;top:9px;font-size:12px">Headline</div><div class="a gray" style="left:8px;top:35px;font-size:11px">Body</div><div class="a gray" style="left:8px;top:79px;font-size:11px">Footer</div></div>
 <div class="sc" style="left:144px;top:646px;height:100px"><div class="a" style="left:8px;top:9px;font-size:12px">Headline</div><div class="a gray" style="left:8px;top:35px;font-size:11px">Body</div><div class="a gray" style="left:8px;top:79px;font-size:11px">Footer</div></div>
 <div class="sc" style="left:260px;top:646px;height:100px"><div class="a" style="left:8px;top:9px;font-size:12px">Headline</div><div class="a gray" style="left:8px;top:35px;font-size:11px">Body</div><div class="a gray" style="left:8px;top:79px;font-size:11px">Footer</div></div>

 <div class="nav">
  <svg class="a" style="left:19px;top:10px" width="20" height="18" viewBox="0 0 20 18"><path d="M10 1L0.5 9.5h2.5V17h5v-5h4v5h5V9.5h2.5z" fill="#1a7bbf"/></svg>
  <svg class="a" style="left:103px;top:9px" width="18" height="20" viewBox="0 0 18 20"><rect x="1" y="3" width="16" height="16" rx="2" fill="none" stroke="#111" stroke-width="2"/><rect x="1" y="3" width="16" height="4" fill="#111"/><rect x="4" y="0.5" width="2" height="4" fill="#111"/><rect x="12" y="0.5" width="2" height="4" fill="#111"/><g fill="#111"><rect x="4.5" y="9.5" width="2.5" height="2.5"/><rect x="8" y="9.5" width="2.5" height="2.5"/><rect x="11.5" y="9.5" width="2.5" height="2.5"/><rect x="4.5" y="13" width="2.5" height="2.5"/><rect x="8" y="13" width="2.5" height="2.5"/><rect x="11.5" y="13" width="2.5" height="2.5"/></g></svg>
  <svg class="a" style="left:185px;top:12px" width="20" height="14" viewBox="0 0 20 14"><path d="M0 1l20 -1v13l-20 1z" fill="#111"/><circle cx="10" cy="7" r="3" fill="#fff"/></svg>
  <svg class="a" style="left:268px;top:10px" width="20" height="17" viewBox="0 0 20 17"><path d="M0 1q5-1 9.3 1v15q-4.3-2-9.3-1zM20 1q-5-1-9.3 1v15q4.3-2 9.3-1z" fill="#111"/></svg>
  <svg class="a" style="left:351px;top:9px" width="20" height="19" viewBox="0 0 20 19"><circle cx="7" cy="5" r="4.3" fill="#111"/><path d="M0 18v-3a5 5 0 0 1 5-5h4a5 5 0 0 1 3 1v7z" fill="#111"/><circle cx="15" cy="13.5" r="3.6" fill="none" stroke="#111" stroke-width="2.4" stroke-dasharray="2 1.2"/><circle cx="15" cy="13.5" r="1.2" fill="#111"/></svg>
  <div class="a b" style="left:18px;top:37px;font-size:10px;color:#555">Menu</div>
  <div class="a gray" style="left:101px;top:37px;font-size:10px">Menu</div>
  <div class="a gray" style="left:184px;top:37px;font-size:10px">Menu</div>
  <div class="a gray" style="left:267px;top:37px;font-size:10px">Menu</div>
  <div class="a gray" style="left:350px;top:37px;font-size:10px">Menu</div>
 </div>
 <div class="home"></div>
</div>

</body></html>
